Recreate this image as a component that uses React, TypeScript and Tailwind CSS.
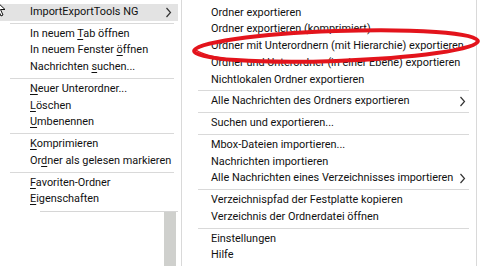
import type { ReactNode } from "react";

type Item = { label: ReactNode; sub?: boolean; active?: boolean } | "sep";

// access key underline
const K = ({ children }: { children: ReactNode }) => (
  <span className="underline decoration-1 underline-offset-[2px]">{children}</span>
);

const leftItems: Item[] = [
  { label: "ImportExportTools NG", sub: true, active: true },
  "sep",
  { label: <>In neuem <K>T</K>ab öffnen</> },
  { label: <>In neuem Fenster <K>ö</K>ffnen</> },
  { label: <>Nachrichten <K>s</K>uchen...</> },
  "sep",
  { label: <><K>N</K>euer Unterordner...</> },
  { label: <><K>L</K>öschen</> },
  { label: <><K>U</K>mbenennen</> },
  "sep",
  { label: <><K>K</K>omprimieren</> },
  { label: <>Or<K>d</K>ner als gelesen markieren</> },
  "sep",
  { label: <><K>F</K>avoriten-Ordner</> },
  { label: <><K>E</K>igenschaften</> },
];

const rightItems: Item[] = [
  { label: "Ordner exportieren" },
  { label: "Ordner exportieren (komprimiert)" },
  { label: "Ordner mit Unterordnern (mit Hierarchie) exportieren" },
  { label: "Ordner und Unterordner (in einer Ebene) exportieren" },
  { label: "Nichtlokalen Ordner exportieren" },
  "sep",
  { label: "Alle Nachrichten des Ordners exportieren", sub: true },
  "sep",
  { label: "Suchen und exportieren..." },
  "sep",
  { label: "Mbox-Dateien importieren..." },
  { label: "Nachrichten importieren" },
  { label: "Alle Nachrichten eines Verzeichnisses importieren", sub: true },
  "sep",
  { label: "Verzeichnispfad der Festplatte kopieren" },
  { label: "Verzeichnis der Ordnerdatei öffnen" },
  "sep",
  { label: "Einstellungen" },
  { label: "Hilfe" },
];

function Chevron() {
  return (
    <svg width="7" height="11" viewBox="0 0 7 11" className="shrink-0">
      <polyline points="1.5,1 5.5,5.5 1.5,10" fill="none" stroke="#333" strokeWidth="1.2" />
    </svg>
  );
}

function Menu({ items, textLeft, sepClass, chevronClass }: { items: Item[]; textLeft: string; sepClass: string; chevronClass: string }) {
  return (
    <div className="flex flex-col">
      {items.map((it, i) =>
        it === "sep" ? (
          <div key={i} className="h-[5px] flex items-center">
            <div className={`h-px bg-[#d9d9d9] ${sepClass}`}></div>
          </div>
        ) : (
          <div key={i} className={`h-[16.75px] flex items-center justify-between ${textLeft} ${it.active ? "bg-[#e3e3e3]" : ""}`}>
            <span className="whitespace-nowrap">{it.label}</span>
            {it.sub && <span className={chevronClass}><Chevron /></span>}
          </div>
        )
      )}
    </div>
  );
}

export default function App() {
  return (
    <div
      className="relative w-[480px] h-[266px] overflow-hidden bg-white flex text-[10.9px] text-[#111] leading-none"
      style={{ fontFamily: "Roboto, 'Liberation Sans', sans-serif" }}
    >
      {/* Kontextmenü Ordner */}
      <div className="w-[181px] shrink-0 flex flex-col">
        <div className="w-[178px] pt-[4px] pb-[3px]">
          <Menu items={leftItems} textLeft="pl-[30px]" sepClass="ml-[10px] w-[164px]" chevronClass="pr-[6px]" />
        </div>
        <div className="ml-[40px] w-[138px] h-px bg-[#d6d6d6]"></div>
        <div className="flex-1 flex">
          <div className="w-[164px]"></div>
          <div className="w-[12px] bg-[#cfd0cd]"></div>
        </div>
      </div>

      {/* Untermenü ImportExportTools NG */}
      <div className="w-[296px] shrink-0 border-x border-[#d9d9d9] pt-[4.6px]">
        <Menu items={rightItems} textLeft="pl-[29px]" sepClass="ml-[16px] w-[271px]" chevronClass="pr-[10px]" />
      </div>

      {/* Mauszeiger */}
      <svg className="absolute left-[-6px] top-[-1px]" width="16" height="20" viewBox="0 0 16 20">
        <path d="M1 1 L1 15 L4.5 11.5 L7 17 L9 16 L6.5 10.5 L11 10.5 Z" fill="#fff" stroke="#111" strokeWidth="1" strokeLinejoin="round" />
      </svg>

      {/* rote Markierung */}
      <svg className="absolute left-0 top-0 pointer-events-none" width="480" height="266" viewBox="0 0 480 266">
        <ellipse cx="336" cy="46" rx="142" ry="15" transform="rotate(-2 336 46)" fill="none" stroke="#e3141c" strokeWidth="4" />
        <path d="M196 50 C 210 60, 260 63, 320 62" fill="none" stroke="#e3141c" strokeWidth="1.5" />
      </svg>
    </div>
  );
}
